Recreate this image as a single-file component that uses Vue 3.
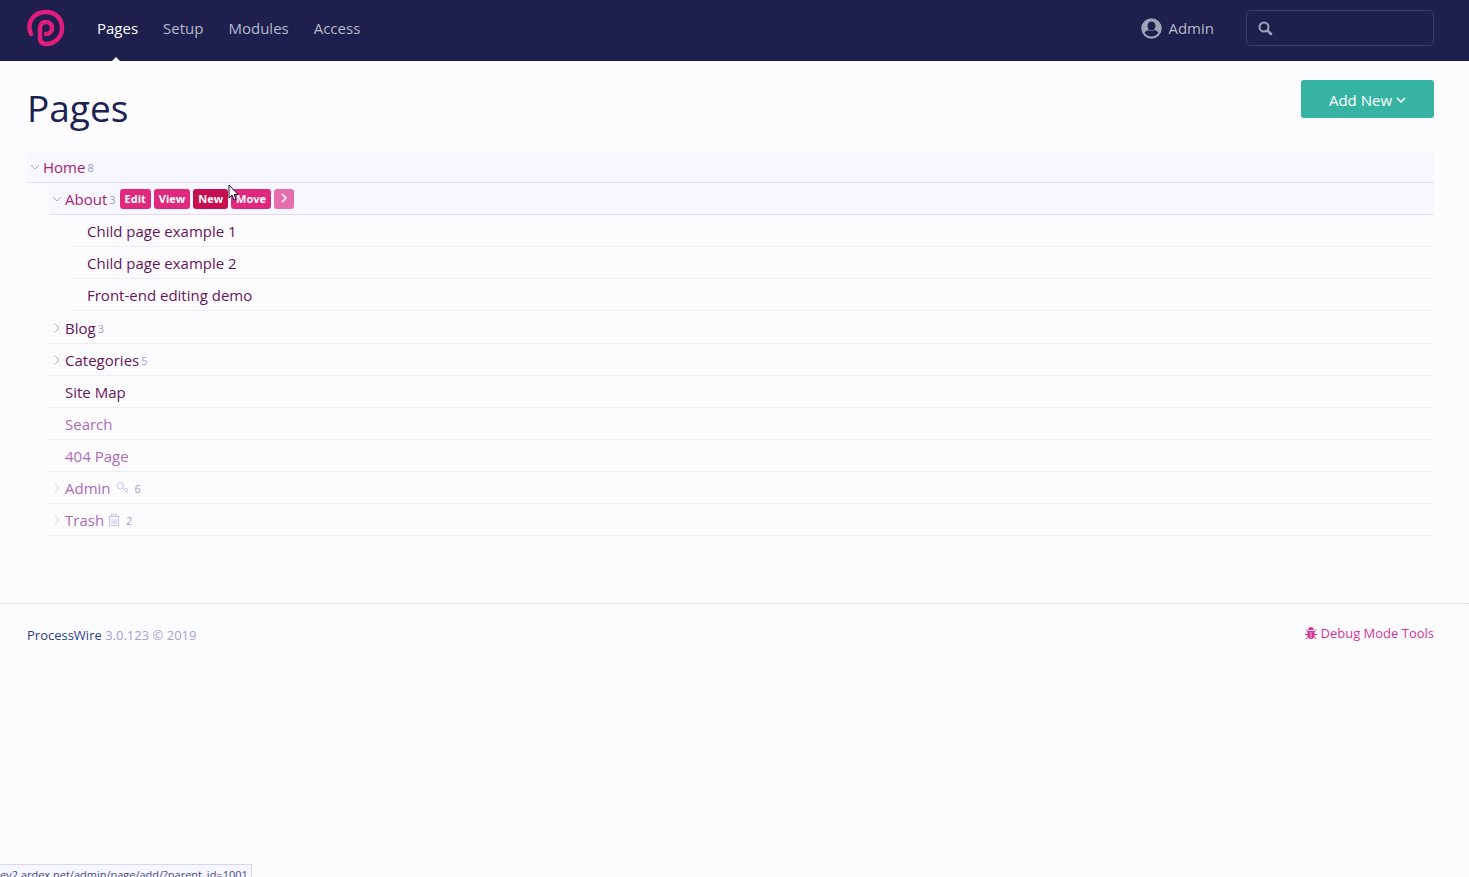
<script setup>
import { ref } from 'vue'

const nav = ['Pages', 'Setup', 'Modules', 'Access']
const actions = ['Edit', 'View', 'New', 'Move']
const search = ref('')

const children = ['Child page example 1', 'Child page example 2', 'Front-end editing demo']

const pages = [
  { title: 'About', count: 3, open: true, children },
  { title: 'Blog', count: 3 },
  { title: 'Categories', count: 5 },
  { title: 'Site Map' },
  { title: 'Search', hidden: true },
  { title: '404 Page', hidden: true },
  { title: 'Admin', count: 6, icon: 'key', hidden: true },
  { title: 'Trash', count: 2, icon: 'trash', hidden: true },
]
</script>

<template>
  <div class="page">
    <header class="masthead">
      <a href="#" class="logo" aria-label="ProcessWire">
        <svg width="38" height="38" viewBox="0 0 38 38" fill="none">
          <path
            d="M4 25 C-1 13 7 3 19 3 C29 3 35 10 35 19 C35 28 28 35 19 35 C15 35 13 33 13 29 V19 C13 15 15.500 13 19 13 C22.500 13 25 15.500 25 19 C25 22.500 22.500 25 19 25"
            stroke="#e01c7c"
            stroke-width="4.500"
            stroke-linecap="round"
          />
        </svg>
      </a>

      <nav class="nav">
        <a v-for="(item, i) in nav" :key="item" href="#" :class="{ active: i === 0 }">{{ item }}</a>
      </nav>

      <a href="#" class="user">
        <svg width="21" height="21" viewBox="0 0 21 21">
          <circle cx="10.5" cy="10.5" r="9.5" fill="#a0a3b8" stroke="#a0a3b8" stroke-width="1.500" />
          <path d="M3.500 14.500 Q5 12.500 7.500 12 Q10.500 14 13.500 12 Q16 12.500 17.500 14.500 Q15 18.500 10.500 18.500 Q6 18.500 3.500 14.500Z" fill="#1e1f4c" />
          <ellipse cx="10.5" cy="8" rx="4" ry="4.5" fill="#1e1f4c" />
        </svg>
        Admin
      </a>

      <form class="search" @submit.prevent>
        <label for="search" aria-label="Search">
          <svg width="15" height="15" viewBox="0 0 15 15" fill="none" stroke="#a0a3b8" stroke-width="2">
            <circle cx="6" cy="6" r="4.500" />
            <path d="M9.500 9.500 L13 13" stroke-width="2.500" stroke-linecap="round" />
          </svg>
        </label>
        <input id="search" v-model="search" type="text" />
      </form>
    </header>

    <main class="content">
      <div class="heading">
        <h1>Pages</h1>
        <button class="add">
          Add New
          <svg width="10" height="10" viewBox="0 0 10 10" fill="none" stroke="currentColor" stroke-width="1.500">
            <path d="M1 3 L5 7 L9 3" />
          </svg>
        </button>
      </div>

      <!-- PAGE TREE -->
      <div class="row hover">
        <svg class="toggle open" width="10" height="10" viewBox="0 0 10 10"><path d="M3 1 L7 5 L3 9" /></svg>
        <a href="#">Home</a>
        <span class="count">8</span>
      </div>
      <ul class="tree">
        <li v-for="page in pages" :key="page.title">
          <div class="row" :class="{ hover: page.open, muted: page.hidden }">
            <svg v-if="page.count" class="toggle" :class="{ open: page.open }" width="10" height="10" viewBox="0 0 10 10">
              <path d="M3 1 L7 5 L3 9" />
            </svg>
            <span v-else class="toggle"></span>
            <a href="#">{{ page.title }}</a>
            <svg v-if="page.icon === 'key'" class="icon" width="14" height="14" viewBox="0 0 14 14">
              <path d="M2 3.500 L5 1.500 L8 3 L8.500 6 L6 8 L3.500 7.500 Z" />
              <path d="M7 6.500 L12.500 12 M9 8.500 L11 7 L13 9 L11 11" />
            </svg>
            <svg v-if="page.icon === 'trash'" class="icon" width="12" height="14" viewBox="0 0 12 14">
              <path d="M0.500 3.500 H11.500 M3.500 3 V1.500 H8.500 V3 M1.500 4 V12.500 H10.500 V4 M4 6 V11 M6 6 V11 M8 6 V11" />
            </svg>
            <span v-if="page.count" class="count" :class="{ spaced: page.icon }">{{ page.count }}</span>

            <div v-if="page.open" class="actions">
              <button v-for="action in actions" :key="action" :class="{ current: action === 'New' }">
                {{ action }}
              </button>
              <button class="more" aria-label="More">
                <svg width="8" height="10" viewBox="0 0 8 10" fill="none" stroke="currentColor" stroke-width="1.500">
                  <path d="M2 1 L6 5 L2 9" />
                </svg>
              </button>
              <svg class="pointer" width="12" height="18" viewBox="0 0 12 18">
                <path d="M1 1 V14 L4 11 L6 16 L8 15 L6 10.500 H10 Z" fill="#fff" stroke="#1a1433" />
              </svg>
            </div>
          </div>
          <ul v-if="page.children" class="tree nested">
            <li v-for="child in page.children" :key="child">
              <div class="row">
                <span class="toggle"></span>
                <a href="#">{{ child }}</a>
              </div>
            </li>
          </ul>
        </li>
      </ul>
    </main>

    <footer class="footer">
      <p><a href="#">ProcessWire</a> 3.0.123 © 2019</p>
      <a href="#" class="debug">
        <svg width="12" height="13" viewBox="0 0 12 13" fill="none" stroke="currentColor">
          <path d="M3 3 Q3.500 0 6 0 Q8.500 0 9 3Z M2.500 4 H9.500 V9 Q9 12 6 12 Q3 12 2.500 9Z" fill="currentColor" stroke="none" />
          <path d="M3 5 L1 2.500 M9 5 L11 2.500 M0 7.500 H12 M3 9.500 L1 12 M9 9.500 L11 12" />
          <path d="M6 5 V11" stroke="#f3b4da" />
        </svg>
        Debug Mode Tools
      </a>
    </footer>

    <div class="status">ev2.ardex.net/admin/page/add/?parent_id=1001</div>
  </div>
</template>

<style>
body {
  margin: 0;
  background: #fcfcff;
}
</style>

<style scoped>
.page {
  font-family: 'Open Sans', 'Noto Sans', sans-serif;
  font-size: 15px;
  line-height: 20px;
  color: #1c2048;
}

a {
  color: inherit;
  text-decoration: none;
}

button {
  font-family: inherit;
  border: none;
  cursor: pointer;
}

svg {
  flex: none;
}

.masthead {
  display: flex;
  align-items: center;
  height: 61px;
  box-sizing: border-box;
  padding: 0 35px 5px 27px;
  background: #1e1f4c;
  color: #b6b8cc;
}

.logo {
  display: flex;
}

.nav {
  display: flex;
  gap: 25px;
  margin-left: 32px;
}

.nav a {
  position: relative;
}

.nav .active {
  color: #fff;
}

.nav .active::after {
  content: '';
  position: absolute;
  left: 50%;
  bottom: -23px;
  margin-left: -6px;
  border: 4px solid transparent;
  border-top: none;
  border-bottom-color: #fcfcff;
}

.user {
  display: flex;
  align-items: center;
  gap: 6px;
  margin-left: auto;
}

.search {
  display: flex;
  align-items: center;
  box-sizing: border-box;
  width: 188px;
  height: 36px;
  margin-left: 32px;
  padding: 0 11px;
  border: 1px solid #3d3a6a;
  border-radius: 4px;
}

.search label {
  display: flex;
}

.search input {
  flex: 1;
  min-width: 0;
  border: none;
  outline: none;
  background: none;
  color: #fff;
}

.content {
  padding: 19px 35px 0 27px;
}

.heading {
  display: flex;
  justify-content: space-between;
  align-items: flex-start;
  margin-bottom: 15px;
}

h1 {
  margin: 0;
  font-size: 37px;
  font-weight: 400;
  line-height: 56px;
  color: #1b2150;
}

.add {
  display: flex;
  align-items: center;
  justify-content: center;
  gap: 4px;
  width: 133px;
  height: 38px;
  padding: 2px 0 0;
  border-radius: 3px;
  background: #37b3a4;
  color: #fff;
  font-size: 15px;
}

.tree {
  list-style: none;
  margin: 0;
  padding: 0 0 0 22px;
}

.nested {
  padding-bottom: 1px;
}

.row {
  display: flex;
  align-items: center;
  box-sizing: border-box;
  height: 32px;
  padding-left: 3px;
  border-bottom: 1px dotted #e2def6;
  color: #68145a;
}

.row.hover {
  background: #f8f6fe;
  border-bottom: 1px solid #e0dcf6;
  color: #a52473;
}

.row.muted {
  color: #ac6cb4;
}

.toggle {
  width: 10px;
  margin-right: 3px;
  fill: none;
  stroke: #a9a9d6;
}

.toggle.open {
  transform: rotate(90deg);
}

.muted .toggle {
  stroke: #d0cef0;
}

.count {
  margin: 2px 0 0 2px;
  font-size: 11px;
  color: #9aa0d0;
}

.count.spaced {
  margin-left: 6px;
}

.icon {
  margin-left: 4px;
  fill: none;
  stroke: #c0c4ee;
}

.actions {
  position: relative;
  display: flex;
  gap: 3px;
  margin-left: 4px;
}

.actions button {
  height: 20px;
  padding: 0 5px;
  border-radius: 3px;
  background: #e0287c;
  color: #fff;
  font-size: 11px;
  font-weight: 700;
  line-height: 20px;
}

.actions .current {
  background: #c70f50;
}

.actions .more {
  width: 20px;
  padding: 0 6px;
  background: #e66eae;
}

.pointer {
  position: absolute;
  left: 108px;
  top: -5px;
}

.footer {
  display: flex;
  justify-content: space-between;
  align-items: flex-start;
  margin-top: 67px;
  padding: 19px 35px 0 27px;
  border-top: 1px dotted #cfcdea;
  font-size: 13px;
}

.footer p {
  margin: 2px 0 0;
  color: #a3a0d8;
}

.footer p a {
  color: #2c3c82;
}

.debug {
  display: flex;
  align-items: center;
  gap: 3px;
  color: #d4349a;
}

/* link target shown in the bottom corner of the window */
.status {
  position: fixed;
  left: 0;
  bottom: 0;
  height: 12px;
  padding-right: 3px;
  overflow: hidden;
  border: 1px solid #d8d6f4;
  border-left: none;
  border-bottom: none;
  background: #f6f6ff;
  font-size: 11px;
  color: #4a4a80;
}
</style>
